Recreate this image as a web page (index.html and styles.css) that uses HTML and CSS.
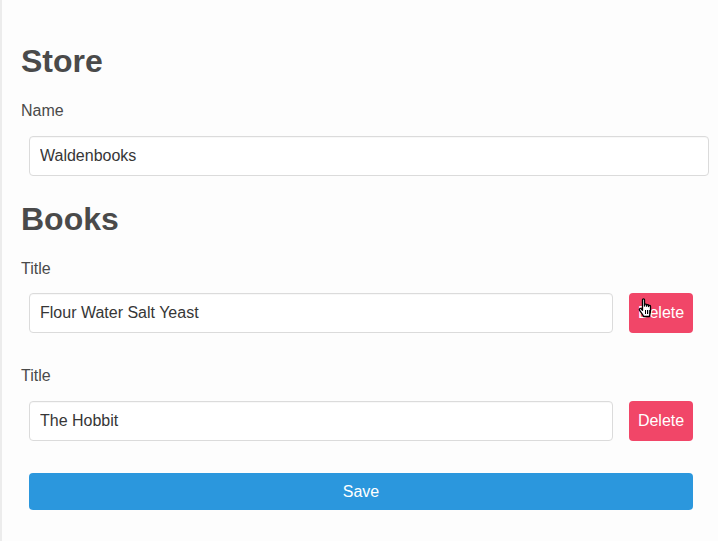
FILE: index.html
```html
<!DOCTYPE html>
<html>
<head>
<meta charset="utf-8">
<link rel="stylesheet" href="styles.css">
</head>
<body>
<div class="page">
  <h1 class="title">Store</h1>
  <label class="label">Name</label>
  <div class="field">
    <input class="input" type="text" value="Waldenbooks">
  </div>
  <h1 class="title books">Books</h1>
  <div class="book">
    <label class="label">Title</label>
    <div class="row">
      <input class="input" type="text" value="Flour Water Salt Yeast">
      <button class="btn danger hovered">Delete
        <svg class="cursor" width="17" height="20" viewBox="0 0 17 20">
          <path d="M4.5 1.8 C4.5 0.6 6.5 0.6 6.5 1.8 L6.5 8 L6.5 6.8 C6.5 5.8 8.5 5.8 8.5 6.8 L8.5 8.2 L8.5 7.4 C8.5 6.4 10.5 6.4 10.5 7.4 L10.5 8.6 L10.5 8.2 C10.5 7.2 12.5 7.2 12.5 8.2 L12.5 13 C12.5 15 11.5 16.5 11.5 18.5 L5.5 18.5 C5 16.5 3 14.5 1.5 12.2 C0.8 11 2.2 9.8 3.2 10.8 L4.5 12.2 Z" fill="#fff" stroke="#000" stroke-width="1.3" stroke-linejoin="round"/>
          <path d="M7.5 12 V16 M9.5 12 V16 M11.3 12 V16" stroke="#000" stroke-width="1"/>
        </svg>
      </button>
    </div>
  </div>
  <div class="book second">
    <label class="label">Title</label>
    <div class="row">
      <input class="input" type="text" value="The Hobbit">
      <button class="btn danger">Delete</button>
    </div>
  </div>
  <div class="actions">
    <button class="btn save">Save</button>
  </div>
</div>
</body>
</html>
```
FILE: styles.css
```css
html, body {
  margin: 0;
  padding: 0;
  background: #fdfdfd;
}
body {
  font-family: "Liberation Sans", Arial, sans-serif;
  color: #4a4a4a;
  font-size: 16px;
}
.page {
  border-left: 2px solid #ececec;
  min-height: 541px;
  box-sizing: border-box;
  padding: 43px 9px 0 19px;
}
.title {
  margin: 0;
  font-size: 32px;
  line-height: 36px;
  font-weight: 700;
  color: #4a4a4a;
}
.books {
  margin-top: 25px;
}
.label {
  display: block;
  margin-top: 20px;
  line-height: 24px;
  font-size: 16px;
  color: #4a4a4a;
}
.field {
  margin-top: 13px;
  padding-left: 8px;
}
.input {
  display: block;
  box-sizing: border-box;
  width: 100%;
  height: 40px;
  border: 1px solid #dbdbdb;
  border-radius: 4px;
  background: #fff;
  padding: 0 10px;
  font-family: inherit;
  font-size: 16px;
  color: #363636;
  box-shadow: inset 0 1px 1px rgba(10,10,10,0.03);
  outline: none;
}
.book .label {
  margin-top: 20px;
}
.book.second .label {
  margin-top: 31px;
}
.row {
  margin-top: 12px;
  padding-left: 8px;
  padding-right: 16px;
  display: flex;
  gap: 16px;
}
.book.second .row {
  margin-top: 13px;
}
.row .input {
  flex: 1;
}
.btn {
  font-family: inherit;
  font-size: 16px;
  border: none;
  border-radius: 4px;
  color: #fff;
  cursor: pointer;
}
.danger {
  position: relative;
  width: 64px;
  height: 40px;
  flex: none;
  background: #f14668;
  padding: 0;
}
.cursor {
  position: absolute;
  left: 9px;
  top: 5px;
}
.actions {
  margin-top: 32px;
  padding-left: 8px;
  padding-right: 16px;
}
.save {
  display: block;
  width: 100%;
  height: 37px;
  background: #2b97dd;
}
```
